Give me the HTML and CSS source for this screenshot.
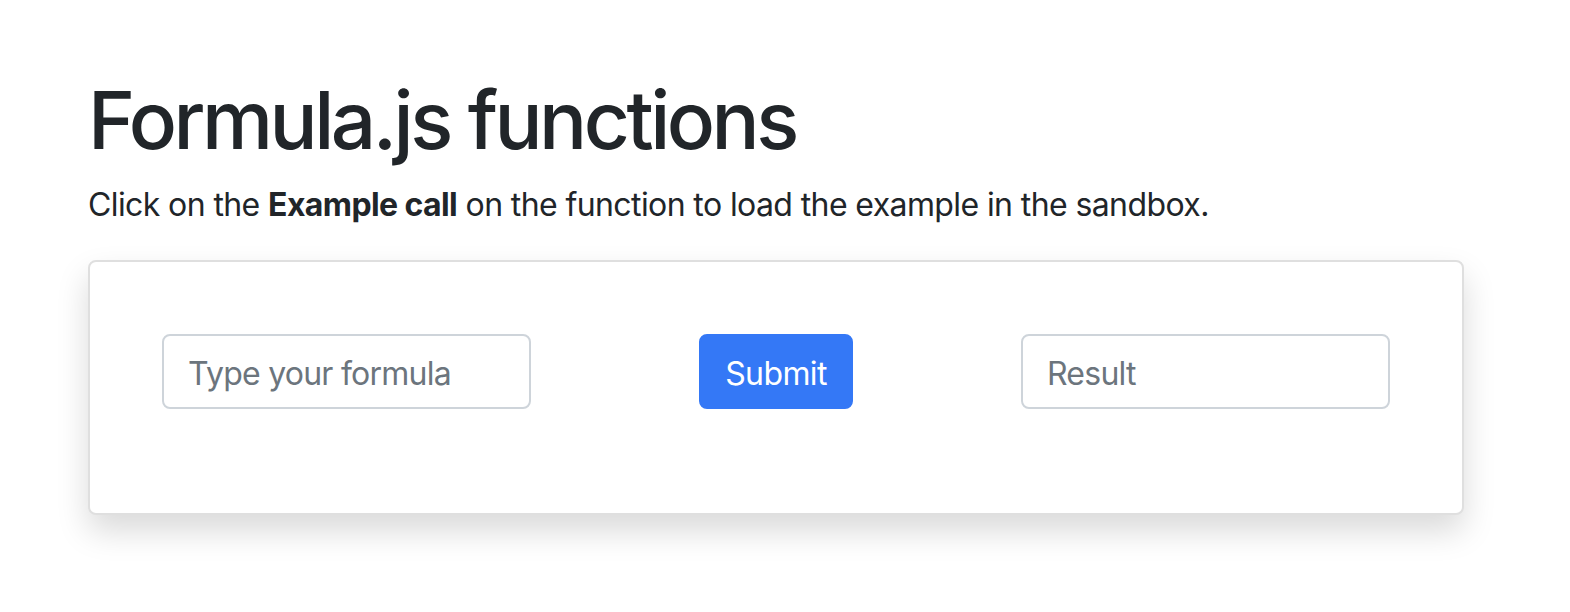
FILE: index.html
```html
<!DOCTYPE html>
<html lang="en">
<head>
  <meta charset="UTF-8" />
  <title>Formula.js functions</title>
  <meta name="viewport" content="width=device-width, initial-scale=1" />
  <link rel="stylesheet" href="styles.css">
</head>
<body>
  <div class="container">
    <h1>Formula.js functions</h1>
    <p class="lead">Click on the <b>Example call</b> on the function to load the example in the sandbox.</p>

    <div class="card">
      <div class="sandbox">
        <input type="text" class="field" placeholder="Type your formula" />
        <button class="btn-submit">Submit</button>
        <input type="text" class="field" placeholder="Result" readonly />
      </div>
    </div>
  </div>
</body>
</html>
```

FILE: styles.css
```css
body {
  background: #fff;
  color: #212529;
  font-family: Inter, 'Liberation Sans', Arial, sans-serif;
  margin: 0;
  padding-bottom: 60px;
}
.container { width: 1376px; margin: 0 0 0 88px; padding-top: 72px; }
h1 { font-size: 80px; font-weight: 500; line-height: 1.2; margin: 0 0 13px 0; letter-spacing: -3.5px; }
.lead { font-size: 32px; line-height: 1.5; margin: 0 0 31px 0; letter-spacing: -0.6px; }
.lead b { font-weight: 700; }
.card {
  background: #fff; border: 2px solid #dfdfdf; border-radius: 8px;
  box-shadow: 0 16px 32px rgba(0,0,0,.15);
  padding: 72px 72px 104px 72px;
}
.sandbox { display: flex; justify-content: space-between; align-items: center; }
.field {
  width: 369px; height: 75px; box-sizing: border-box;
  border: 2px solid #ced4da; border-radius: 8px;
  padding: 14px 24px 10px; font-size: 32px; font-family: inherit; color: #495057;
  letter-spacing: -0.75px;
  background: #fff; outline: none;
}
.field::placeholder { color: #6c757d; }
.btn-submit {
  height: 75px; box-sizing: border-box;
  background: #3478f6; color: #fff; border: 2px solid #3478f6; border-radius: 8px;
  padding: 14px 24px 10px; font-size: 32px; font-family: inherit; letter-spacing: -0.6px; cursor: pointer;
}
```
